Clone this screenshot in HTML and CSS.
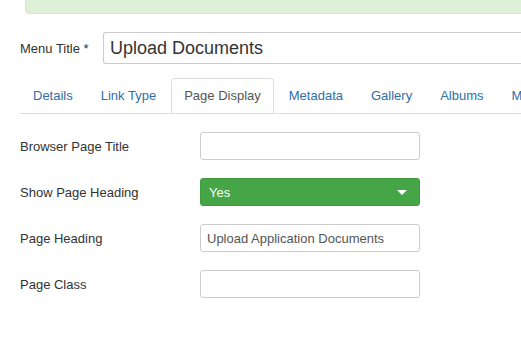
FILE: index.html
```html
<!DOCTYPE html>
<html lang="en">
<head>
    <meta charset="UTF-8">
    <meta name="viewport" content="width=device-width, initial-scale=1.0">
    <title>Edit Menu Item</title>
    <link rel="stylesheet" href="styles.css">
</head>
<body>
    <div class="alert"></div>

    <div class="title-row">
        <label class="title-label">Menu Title *</label>
        <input class="title-input" type="text" value="Upload Documents">
    </div>

    <ul class="tabs">
        <li><a href="#">Details</a></li>
        <li><a href="#">Link Type</a></li>
        <li class="active"><a href="#">Page Display</a></li>
        <li><a href="#">Metadata</a></li>
        <li><a href="#">Gallery</a></li>
        <li><a href="#">Albums</a></li>
        <li><a href="#">Module Assignment</a></li>
    </ul>

    <div class="form">
        <div class="row">
            <label>Browser Page Title</label>
            <input type="text" value="">
        </div>
        <div class="row">
            <label>Show Page Heading</label>
            <div class="select-green">
                <span>Yes</span>
                <span class="caret"></span>
            </div>
        </div>
        <div class="row">
            <label>Page Heading</label>
            <input type="text" value="Upload Application Documents">
        </div>
        <div class="row">
            <label>Page Class</label>
            <input type="text" value="">
        </div>
    </div>
</body>
</html>
```

FILE: styles.css
```css
body {
    font-family: "Liberation Sans", Arial, sans-serif;
    font-size: 13px;
    color: #333;
    margin: 0;
    padding: 0;
    background: #fff;
    overflow: hidden;
}
.alert {
    margin-left: 25px;
    margin-top: -10px;
    height: 22px;
    width: 500px;
    background-color: #dff0d8;
    border: 1px solid #d6e9c6;
    border-radius: 4px;
}
.title-row {
    display: flex;
    align-items: center;
    margin-top: 18px;
    padding-left: 20px;
}
.title-label {
    width: 83px;
    flex-shrink: 0;
    white-space: nowrap;
}
.title-input {
    flex: 1 0 auto;
    width: 430px;
    height: 32px;
    box-sizing: border-box;
    border: 1px solid #ccc;
    border-right: none;
    border-radius: 3px 0 0 3px;
    padding: 0 6px;
    font-family: inherit;
    font-size: 18px;
    color: #333;
}
.tabs {
    list-style: none;
    display: flex;
    margin: 14px 0 0 20px;
    padding: 0;
    border-bottom: 1px solid #ddd;
    white-space: nowrap;
    overflow: hidden;
}
.tabs li {
    margin-right: 2px;
    margin-bottom: -1px;
    flex-shrink: 0;
}
.tabs a {
    display: block;
    padding: 8px 12px;
    line-height: 18px;
    color: #2f6ea8;
    text-decoration: none;
    border: 1px solid transparent;
    border-radius: 4px 4px 0 0;
}
.tabs .active a {
    color: #555;
    background: #fff;
    border-color: #ddd #ddd transparent;
}
.form {
    padding: 18px 0 0 20px;
}
.row {
    display: flex;
    align-items: center;
    margin-bottom: 18px;
}
.row label {
    width: 180px;
    flex-shrink: 0;
}
.row input {
    width: 220px;
    height: 28px;
    box-sizing: border-box;
    border: 1px solid #ccc;
    border-radius: 3px;
    padding: 0 6px;
    font-family: inherit;
    font-size: 13px;
    color: #555;
}
.select-green {
    width: 220px;
    height: 28px;
    box-sizing: border-box;
    background: #46a546;
    border: 1px solid #3f9a3f;
    border-radius: 3px;
    color: #fff;
    display: flex;
    align-items: center;
    justify-content: space-between;
    padding: 0 12px 0 8px;
}
.caret {
    width: 0;
    height: 0;
    border-left: 5px solid transparent;
    border-right: 5px solid transparent;
    border-top: 5px solid #fff;
}
```
